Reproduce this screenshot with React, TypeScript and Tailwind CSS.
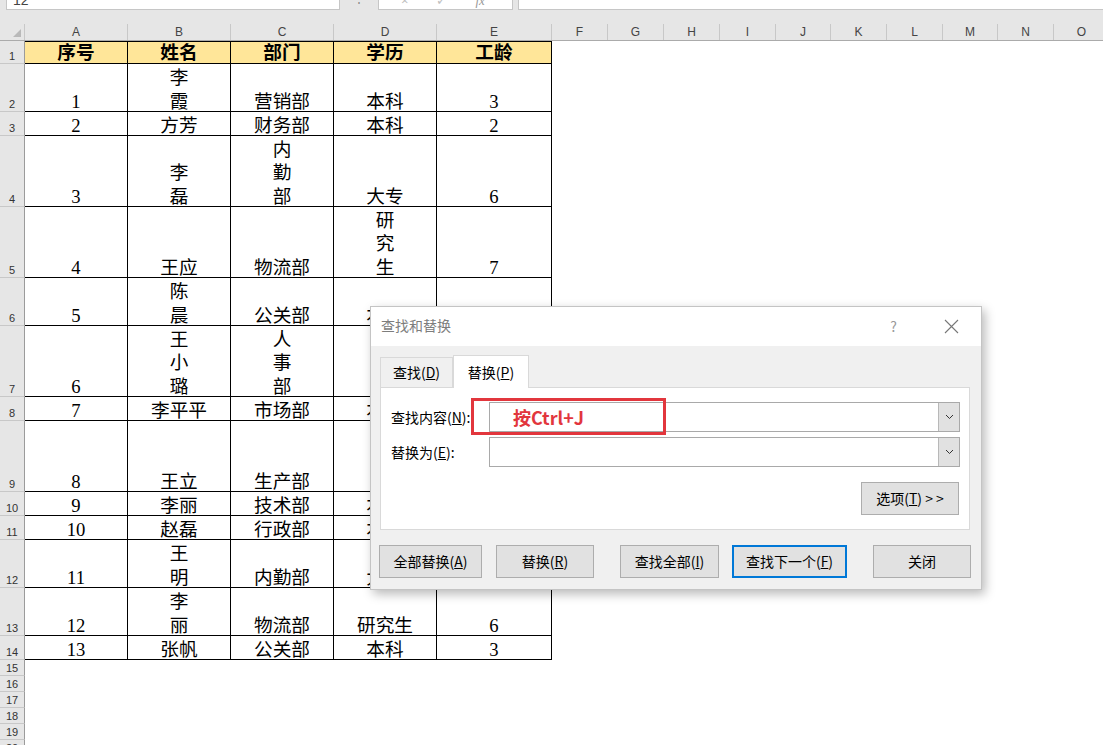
import React from "react";

const cellFont = "font-['Liberation_Serif','Noto_Sans_CJK_SC',serif] text-[18.67px] text-black";
const uiFont = "font-['Noto_Sans_CJK_SC','Liberation_Sans',sans-serif]";

const colLetters = [
  { l: "A", w: "w-[103px]" },
  { l: "B", w: "w-[103px]" },
  { l: "C", w: "w-[103px]" },
  { l: "D", w: "w-[103px]" },
  { l: "E", w: "w-[115px]" },
  { l: "F", w: "w-[56px]" },
  { l: "G", w: "w-[56px]" },
  { l: "H", w: "w-[56px]" },
  { l: "I", w: "w-[56px]" },
  { l: "J", w: "w-[55px]" },
  { l: "K", w: "w-[56px]" },
  { l: "L", w: "w-[56px]" },
  { l: "M", w: "w-[55px]" },
  { l: "N", w: "w-[56px]" },
  { l: "O", w: "w-[56px]" },
];

const tableWidths = ["w-[103px]", "w-[103px]", "w-[103px]", "w-[103px]", "w-[115px]"];

const rows = [
  { n: 2, h: "h-[48px]", v: ["1", "李\n霞", "营销部", "本科", "3"] },
  { n: 3, h: "h-[24px]", v: ["2", "方芳", "财务部", "本科", "2"] },
  { n: 4, h: "h-[71px]", v: ["3", "李\n磊", "内\n勤\n部", "大专", "6"] },
  { n: 5, h: "h-[71px]", v: ["4", "王应", "物流部", "研\n究\n生", "7"] },
  { n: 6, h: "h-[48px]", v: ["5", "陈\n晨", "公关部", "本科", "4"] },
  { n: 7, h: "h-[71px]", v: ["6", "王\n小\n璐", "人\n事\n部", "研\n究\n生", "5"] },
  { n: 8, h: "h-[24px]", v: ["7", "李平平", "市场部", "本科", "8"] },
  { n: 9, h: "h-[71px]", v: ["8", "王立", "生产部", "研\n究\n生", "4"] },
  { n: 10, h: "h-[24px]", v: ["9", "李丽", "技术部", "本科", "3"] },
  { n: 11, h: "h-[24px]", v: ["10", "赵磊", "行政部", "本科", "5"] },
  { n: 12, h: "h-[48px]", v: ["11", "王\n明", "内勤部", "大专", "2"] },
  { n: 13, h: "h-[48px]", v: ["12", "李\n丽", "物流部", "研究生", "6"] },
  { n: 14, h: "h-[24px]", v: ["13", "张帆", "公关部", "本科", "3"] },
];

function RowNum({ n }: { n: number }) {
  return (
    <div className="w-[25px] shrink-0 bg-[#e6e6e6] border-r border-[#9b9b9b] border-b border-b-[#c8c8c8] flex items-end justify-center font-['Liberation_Sans',sans-serif] text-[11px] leading-[13px] text-[#333]">
      {n}
    </div>
  );
}

function Chevron() {
  return (
    <svg width="9" height="6" viewBox="0 0 9 6" className="text-[#333]">
      <path d="M1 1 L4.5 4.5 L8 1" fill="none" stroke="currentColor" strokeWidth="1" />
    </svg>
  );
}

function Combo() {
  return (
    <div className="w-[471px] h-[30px] bg-white border border-[#a9a9a9] flex justify-end">
      <div className="w-[21px] h-full bg-[#e1e1e1] border-l border-[#b8b8b8] flex items-center justify-center">
        <Chevron />
      </div>
    </div>
  );
}

function FindReplaceDialog() {
  return (
    <div
      className={`absolute left-[370px] top-[306px] w-[612px] h-[284px] bg-[#f0f0f0] border border-[#c4c4c4] shadow-[3px_4px_10px_rgba(0,0,0,0.28)] flex flex-col text-[14px] text-black ${uiFont}`}
    >
      {/* title bar */}
      <div className="h-[39px] bg-white flex items-center pl-[10px] pr-[22px] text-[#7d7d7d]">
        <span className="flex-1 -mt-[2px]">查找和替换</span>
        <span className="mr-[47px] text-[#999]">?</span>
        <svg width="15" height="15" viewBox="0 0 15 15">
          <path d="M1 1 L14 14 M14 1 L1 14" stroke="#777" strokeWidth="1.1" />
        </svg>
      </div>

      <div className="pl-[9px] pr-[11px] pt-[8px]">
        {/* tabs */}
        <div className="flex items-end h-[33px]">
          <div className="w-[73px] h-[30px] bg-[#f0f0f0] border border-b-0 border-[#d9d9d9] flex items-center justify-center">
            查找(<u>D</u>)
          </div>
          <div className="w-[76px] h-[33px] bg-white border border-b-0 border-[#d9d9d9] flex items-center justify-center -mb-px relative z-10">
            替换(<u>P</u>)
          </div>
        </div>

        {/* panel */}
        <div className="h-[143px] bg-white border border-[#d9d9d9] pt-[14px] pl-[10px] pr-[9px] flex flex-col">
          <div className="flex items-center">
            <span className="w-[98px]">
              查找内容(<u>N</u>):
            </span>
            <Combo />
          </div>
          <div className="flex items-center mt-[5px]">
            <span className="w-[98px]">
              替换为(<u>E</u>):
            </span>
            <Combo />
          </div>
          <div className="flex justify-end mt-[15px] pr-[1px]">
            <button className="w-[98px] h-[33px] bg-[#e1e1e1] border border-[#adadad] flex items-center justify-center">
              选项(<u>T</u>)&nbsp;&gt; &gt;
            </button>
          </div>
        </div>
      </div>

      {/* bottom buttons */}
      <div className="flex pl-[8px] mt-[15px]">
        <button className="w-[103px] h-[33px] bg-[#e1e1e1] border border-[#adadad] flex items-center justify-center">
          全部替换(<u>A</u>)
        </button>
        <button className="ml-[14px] w-[98px] h-[33px] bg-[#e1e1e1] border border-[#adadad] flex items-center justify-center">
          替换(<u>R</u>)
        </button>
        <button className="ml-[26px] w-[99px] h-[33px] bg-[#e1e1e1] border border-[#adadad] flex items-center justify-center">
          查找全部(<u>I</u>)
        </button>
        <button className="ml-[13px] w-[115px] h-[33px] bg-[#e1e1e1] border-2 border-[#0078d7] flex items-center justify-center">
          查找下一个(<u>F</u>)
        </button>
        <button className="ml-[26px] w-[98px] h-[33px] bg-[#e1e1e1] border border-[#adadad] flex items-center justify-center">
          关闭
        </button>
      </div>

      {/* red annotation box */}
      <div className="absolute left-[100px] top-[91px] w-[195px] h-[37px] border-[3px] border-[#e2363d] flex items-center pl-[39px]">
        <span className="text-[18px] font-semibold text-[#e2363d] leading-none">按Ctrl+J</span>
      </div>
    </div>
  );
}

export default function App() {
  return (
    <div className="relative w-[1103px] h-[745px] overflow-hidden bg-white">
      {/* formula bar */}
      <div className="h-[24px] bg-[#e6e6e6] flex items-start">
        <div className="ml-[6px] w-[334px] h-[10px] bg-white border border-t-0 border-[#c6c6c6] overflow-hidden">
          <div className="-mt-[10px] pl-[6px] font-['Liberation_Sans',sans-serif] text-[14px] text-[#444]">12</div>
        </div>
        <div className="w-[38px] h-[10px] flex justify-center">
          <span className="-mt-[8px] text-[12px] text-[#888] leading-none">⋮</span>
        </div>
        <div className="w-[135px] h-[10px] bg-white border border-t-0 border-[#c6c6c6] overflow-hidden flex gap-[28px] pl-[22px]">
          <span className="-mt-[9px] text-[13px] text-[#c0c0c0]">×</span>
          <span className="-mt-[9px] text-[13px] text-[#c0c0c0]">✓</span>
          <span className="-mt-[9px] text-[13px] text-[#999] italic font-['Liberation_Serif',serif]">fx</span>
        </div>
        <div className="ml-[5px] flex-1 h-[10px] bg-white border border-t-0 border-r-0 border-[#c6c6c6]"></div>
      </div>

      {/* column headers */}
      <div className="flex h-[17px] bg-[#e6e6e6] border-b border-[#ababab] font-['Liberation_Sans',sans-serif] text-[12px] text-[#444]">
        <div className="w-[25px] shrink-0 border-r border-[#c8c8c8] flex items-end justify-end pr-[3px] pb-[3px]">
          <svg width="8" height="8" viewBox="0 0 8 8">
            <path d="M8 0 L8 8 L0 8 Z" fill="#b9b9b9" />
          </svg>
        </div>
        {colLetters.map((c) => (
          <div
            key={c.l}
            className={`${c.w} shrink-0 border-r border-[#c8c8c8] flex items-center justify-center leading-none`}
          >
            {c.l}
          </div>
        ))}
      </div>

      {/* row 1 header */}
      <div className="flex h-[23px]">
        <RowNum n={1} />
        {["序号", "姓名", "部门", "学历", "工龄"].map((t, i) => (
          <div
            key={t}
            className={`${tableWidths[i]} shrink-0 bg-[#ffe699] border-t border-b border-r border-black flex items-center justify-center font-bold leading-none ${cellFont}`}
          >
            <span className="mt-[1px]">{t}</span>
          </div>
        ))}
        <div className="flex-1"></div>
      </div>

      {/* data rows */}
      {rows.map((r) => (
        <div key={r.n} className={`flex ${r.h}`}>
          <RowNum n={r.n} />
          {r.v.map((t, i) => (
            <div
              key={i}
              className={`${tableWidths[i]} shrink-0 border-b border-r border-black flex items-end justify-center text-center whitespace-pre-line leading-[23.5px] ${cellFont}`}
            >
              <span className="-mb-[2px]">{t}</span>
            </div>
          ))}
          <div className="flex-1"></div>
        </div>
      ))}

      {/* empty rows */}
      {[15, 16, 17, 18, 19, 20].map((n) => (
        <div key={n} className="flex h-[16px]">
          <RowNum n={n} />
          <div className="flex-1"></div>
        </div>
      ))}

      <FindReplaceDialog />
    </div>
  );
}
